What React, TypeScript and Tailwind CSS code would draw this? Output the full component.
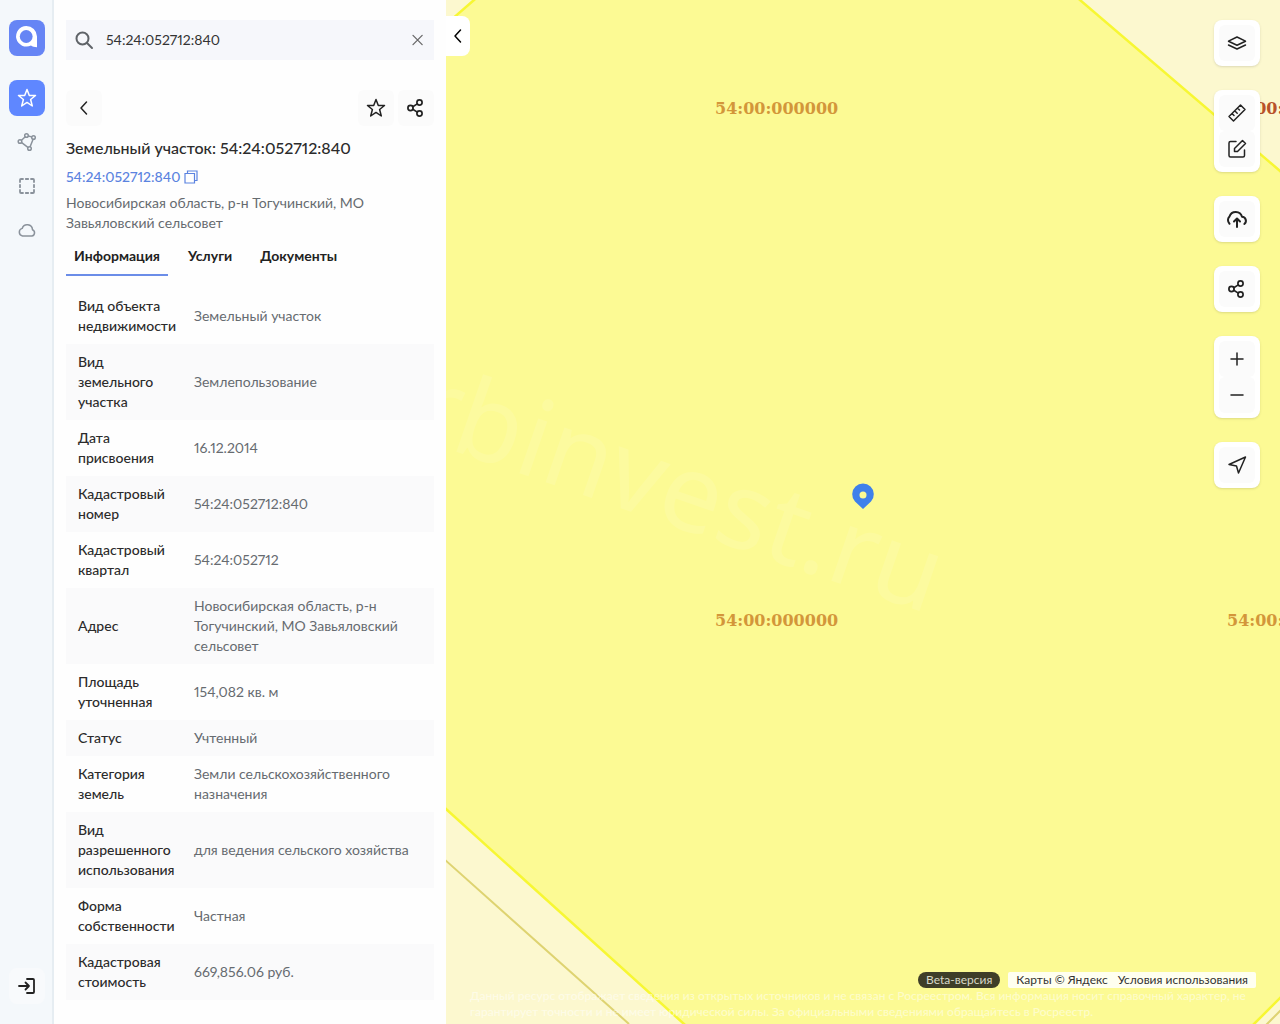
import type { ReactNode } from "react"
import clsx from "clsx"

const properties = [
  ["Вид объекта недвижимости", "Земельный участок"],
  ["Вид земельного участка", "Землепользование"],
  ["Дата присвоения", "16.12.2014"],
  ["Кадастровый номер", "54:24:052712:840"],
  ["Кадастровый квартал", "54:24:052712"],
  ["Адрес", "Новосибирская область, р-н Тогучинский, МО Завьяловский сельсовет"],
  ["Площадь уточненная", "154,082 кв. м"],
  ["Статус", "Учтенный"],
  ["Категория земель", "Земли сельскохозяйственного назначения"],
  ["Вид разрешенного использования", "для ведения сельского хозяйства"],
  ["Форма собственности", "Частная"],
  ["Кадастровая стоимость", "669,856.06 руб."],
]

const tabs = ["Информация", "Услуги", "Документы"]

type IconProps = { children: ReactNode; width?: number; size?: string }

function Icon({ children, width = 1.5, size = "size-6" }: IconProps) {
  return (
    <svg
      viewBox="0 0 24 24"
      className={clsx("shrink-0", size)}
      fill="none"
      stroke="currentColor"
      strokeWidth={width}
      strokeLinecap="round"
      strokeLinejoin="round"
      aria-hidden="true"
    >
      {children}
    </svg>
  )
}

const starPath = <path d="M12 3.5l2.3 6h6.2l-4.9 4 1.7 6.5-5.3-3.6L6.700 20l1.700-6.500-4.900-4h6.200z" />

function ShareIcon() {
  return (
    <Icon width={1.7}>
      <circle cx="6.5" cy="12" r="2.6" />
      <circle cx="15.5" cy="6.5" r="2.6" />
      <circle cx="15.5" cy="17.5" r="2.6" />
      <path d="M8.800 10.700l4.500-2.800M8.800 13.300l4.500 2.800" />
    </Icon>
  )
}

function ChevronLeft() {
  return (
    <Icon>
      <path d="M14.500 6l-5.500 6 5.500 6" />
    </Icon>
  )
}

function Logo() {
  return (
    <a href="#" aria-label="Главная" className="flex size-9 items-center justify-center rounded-lg bg-[#6685f5]">
      <svg viewBox="0 0 36 36" className="size-9" aria-hidden="true">
        <path
          d="M17.200 6a10.300 10.300 0 1 0 4.800 19.500c1.300 1 3.500 1.700 6 1.700V16.500A10.700 10.700 0 0 0 17.200 6z"
          fill="#fff"
        />
        <circle cx="17.2" cy="16.500" r="6.4" fill="#6685f5" />
      </svg>
    </a>
  )
}

function NavButton({ label, active, children }: { label: string; active?: boolean; children: ReactNode }) {
  return (
    <button
      type="button"
      aria-label={label}
      className={clsx(
        "flex size-9 items-center justify-center rounded-lg",
        active ? "bg-[#5f87ff] text-white" : "text-[#8a929b]"
      )}
    >
      {children}
    </button>
  )
}

function Sidebar() {
  return (
    <nav className="flex w-[54px] shrink-0 flex-col items-center bg-[#f4f8fb] py-5 shadow-[inset_-2px_0_#e6edf2]">
      <Logo />
      <div className="mt-6 flex flex-col gap-2">
        <NavButton label="Избранное" active>
          <Icon>{starPath}</Icon>
        </NavButton>
        <NavButton label="Полигон">
          <Icon>
            <circle cx="5" cy="11.5" r="1.800" />
            <circle cx="11.5" cy="5.5" r="1.800" />
            <circle cx="18.5" cy="7.5" r="1.800" />
            <circle cx="14.5" cy="18.5" r="1.800" />
            <path d="M6.500 10.200l3.500-3.200M13.500 6l3 .9M18 9.500l-2.800 7M6.700 12.600l6.200 4.700" />
          </Icon>
        </NavButton>
        <NavButton label="Выделение">
          <Icon width={1.8}>
            <path d="M5 8V6a1 1 0 0 1 1-1h2M16 5h2a1 1 0 0 1 1 1v2M19 16v2a1 1 0 0 1-1 1h-2M8 19H6a1 1 0 0 1-1-1v-2M10.800 5h2.400M10.800 19h2.400M5 10.800v2.400M19 10.800v2.400" />
          </Icon>
        </NavButton>
        <NavButton label="Облако">
          <Icon>
            <path d="M7.500 18h9.300a3.300 3.300 0 0 0 .7-6.300 5.300 5.300 0 0 0-10.300-1.300A3.900 3.900 0 0 0 7.500 18z" />
          </Icon>
        </NavButton>
      </div>
      <button
        type="button"
        aria-label="Войти"
        className="mt-auto flex size-9 items-center justify-center rounded-lg bg-[#f8fafc] text-[#222]"
      >
        <Icon width={1.8}>
          <path d="M12 5h6a1 1 0 0 1 1 1v12a1 1 0 0 1-1 1h-6M4 12h10M10.500 8.500L14 12l-3.500 3.500" />
        </Icon>
      </button>
    </nav>
  )
}

function SoftButton({ label, children }: { label: string; children: ReactNode }) {
  return (
    <button
      type="button"
      aria-label={label}
      className="flex size-9 items-center justify-center rounded-md bg-[#fbfbfb] text-[#222]"
    >
      {children}
    </button>
  )
}

function SearchBar() {
  return (
    <form className="flex h-10 items-center bg-[#f6f7fb] px-[6px]" onSubmit={(e) => e.preventDefault()}>
      <label htmlFor="search" aria-label="Поиск" className="text-[#5f6368]">
        <Icon width={2}>
          <circle cx="10.5" cy="10.5" r="6" />
          <path d="M15 15l5 5" />
        </Icon>
      </label>
      <input
        id="search"
        type="text"
        defaultValue="54:24:052712:840"
        className="ml-[10px] min-w-0 flex-1 bg-transparent text-sm text-[#333] outline-none"
      />
      <button type="button" aria-label="Очистить" className="text-[#666]">
        <Icon size="size-5">
          <path d="M6 6.500l11 11M17 6.500l-11 11" />
        </Icon>
      </button>
    </form>
  )
}

function InfoPanel() {
  return (
    <section className="w-98 shrink-0 overflow-hidden bg-[#fefefe] px-3 pt-5">
      <SearchBar />
      <div className="mt-[30px] flex gap-1">
        <SoftButton label="Назад">
          <ChevronLeft />
        </SoftButton>
        <div className="flex-1" />
        <SoftButton label="В избранное">
          <Icon>{starPath}</Icon>
        </SoftButton>
        <SoftButton label="Поделиться">
          <ShareIcon />
        </SoftButton>
      </div>
      <h1 className="mt-[10px] text-base leading-6 font-medium text-[#2b2b2b]">Земельный участок: 54:24:052712:840</h1>
      <div className="mt-[7px] flex items-center gap-1 text-[#5b83e0]">
        <a href="#" className="text-sm leading-5 font-medium">
          54:24:052712:840
        </a>
        <button type="button" aria-label="Скопировать">
          <svg
            viewBox="0 0 14 14"
            className="size-[14px]"
            fill="none"
            stroke="currentColor"
            strokeWidth="1.200"
            aria-hidden="true"
          >
            <path d="M1 3.500h9.500V13H1zM3.500 3.500V1H13v9.500h-2.500" />
          </svg>
        </button>
      </div>
      <p className="mt-[6px] text-sm leading-5 text-[#666b70]">
        Новосибирская область, р-н Тогучинский, МО Завьяловский сельсовет
      </p>
      <div role="tablist" className="mt-1 flex gap-3">
        {tabs.map((tab, i) => (
          <button
            key={tab}
            type="button"
            role="tab"
            aria-selected={i === 0}
            className={clsx(
              "h-[39px] border-b-2 px-2 text-sm font-bold text-[#222]",
              i === 0 ? "border-[#6b8de8]" : "border-transparent"
            )}
          >
            {tab}
          </button>
        ))}
      </div>
      <table className="mt-3 w-full table-fixed text-left text-sm leading-5">
        <tbody>
          {properties.map(([name, value]) => (
            <tr key={name} className="even:bg-[#fafafb]">
              <th scope="row" className="w-29 py-2 pl-3 font-medium text-[#2b2b2b]">
                {name}
              </th>
              <td className="px-3 py-2 text-[#666b70]">{value}</td>
            </tr>
          ))}
        </tbody>
      </table>
    </section>
  )
}

function MapCanvas() {
  return (
    <svg
      viewBox="0 0 834 1024"
      preserveAspectRatio="xMidYMid slice"
      className="absolute inset-0 size-full"
      aria-hidden="true"
    >
      <rect width="834" height="1024" fill="#fcf8cf" />
      <path
        d="M-10 33L28 0 66-33H594L634 0 834 171 900 227V932L808 1024 790 1042H258L238 1024 0 809-10 800z"
        fill="#fcfa94"
        stroke="#f7f733"
        strokeWidth="2.5"
      />
      <path d="M-2 859L183 1024M819 1026L838 1007" stroke="#ded371" strokeWidth="2" />
      <g fontFamily="DejaVu Serif, serif" fontSize="16" fontWeight="700" fill="#d3963a">
        <text x="269" y="114">54:00:000000</text>
        <text x="269" y="626">54:00:000000</text>
        <text x="781" y="114" fill="#b8522a">54:00:000000</text>
        <text x="781" y="626">54:00:000000</text>
      </g>
      <text
        transform="translate(482 614) rotate(19)"
        textAnchor="end"
        fontFamily="Noto Sans, sans-serif"
        fontSize="108"
        fill="#fff"
        fillOpacity="0.11"
      >
        rbinvest.ru
      </text>
      <path d="M417 509l-8-7.500a10.800 10.800 0 1 1 16 0z" fill="#3f80ea" />
      <circle cx="417" cy="495" r="3.5" fill="#fcfa94" />
    </svg>
  )
}

function ToolGroup({ children }: { children: ReactNode }) {
  return <div className="flex flex-col rounded-lg bg-white p-[5px] shadow-sm">{children}</div>
}

function MapTools() {
  return (
    <div className="absolute top-5 right-5 flex flex-col gap-6">
      <ToolGroup>
        <SoftButton label="Слои">
          <Icon>
            <path d="M12 6L3.500 10.200l8.500 4 8.500-4zM3.500 14l8.500 4 8.500-4" />
          </Icon>
        </SoftButton>
      </ToolGroup>
      <ToolGroup>
        <SoftButton label="Линейка">
          <Icon>
            <path d="M4 15.500L15.500 4 20 8.500 8.500 20zM7 12.500l2 2M9.700 9.800l2.500 2.500M12.500 7l2 2" />
          </Icon>
        </SoftButton>
        <SoftButton label="Редактировать">
          <Icon>
            <path d="M11 4.500H5.500A1.500 1.500 0 0 0 4 6v12.500A1.500 1.500 0 0 0 5.500 20H18a1.500 1.500 0 0 0 1.500-1.500V13M9.500 11.500l8-8 3 3-8 8h-3z" />
          </Icon>
        </SoftButton>
      </ToolGroup>
      <ToolGroup>
        <SoftButton label="Загрузить">
          <Icon width={2}>
            <path d="M4.500 16.700A5 5 0 0 1 4.500 9.500a6.500 6.500 0 0 1 12.500.3 4 4 0 0 1 2.300 7.200M12 20v-8M9 14.500l3-3 3 3" />
          </Icon>
        </SoftButton>
      </ToolGroup>
      <ToolGroup>
        <SoftButton label="Поделиться картой">
          <ShareIcon />
        </SoftButton>
      </ToolGroup>
      <ToolGroup>
        <SoftButton label="Приблизить">
          <Icon>
            <path d="M12 6v12M6 12h12" />
          </Icon>
        </SoftButton>
        <SoftButton label="Отдалить">
          <Icon>
            <path d="M6 12h12" />
          </Icon>
        </SoftButton>
      </ToolGroup>
      <ToolGroup>
        <SoftButton label="Моё местоположение">
          <Icon>
            <path d="M4 11.500L20.500 4 13.500 20l-2-7z" />
          </Icon>
        </SoftButton>
      </ToolGroup>
    </div>
  )
}

function MapFooter() {
  return (
    <footer className="absolute right-6 bottom-1 left-6">
      <div className="flex justify-end gap-2 text-xs leading-4">
        <span className="rounded-full bg-[#3f3e28] px-2 text-[#d8d8c8]">Beta-версия</span>
        <div className="flex gap-[10px] rounded-xs bg-[#fffff0] px-2 text-[#333]">
          <a href="#">Карты © Яндекс</a>
          <a href="#">Условия использования</a>
        </div>
      </div>
      <p className="text-xs leading-4 font-medium text-white/50">
        Данный ресурс отображает сведения из открытых источников и не связан с Росреестром. Вся информация носит
        справочный характер, не гарантирует точности и не имеет юридической силы. За официальными сведениями
        обращайтесь в Росреестр.
      </p>
    </footer>
  )
}

export default function App() {
  return (
    <div className="flex min-h-screen w-full bg-white font-['Lato',sans-serif] proportional-nums">
      <Sidebar />
      <InfoPanel />
      <main className="relative min-w-0 flex-1 overflow-hidden">
        <MapCanvas />
        <button
          type="button"
          aria-label="Свернуть панель"
          className="absolute top-4 left-0 flex h-10 w-6 items-center justify-center rounded-r-lg bg-white text-black"
        >
          <ChevronLeft />
        </button>
        <MapTools />
        <MapFooter />
      </main>
    </div>
  )
}
